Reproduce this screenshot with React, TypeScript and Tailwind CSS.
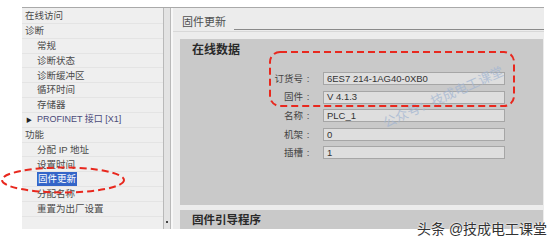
import React from "react";

const cjk = { fontFamily: '"Liberation Sans", "Noto Sans CJK SC", sans-serif' };

type Item = { t: string; lvl: 0 | 1; sel?: boolean; arrow?: boolean; blue?: boolean };
const items: Item[] = [
  { t: "在线访问", lvl: 0 },
  { t: "诊断", lvl: 0 },
  { t: "常规", lvl: 1 },
  { t: "诊断状态", lvl: 1 },
  { t: "诊断缓冲区", lvl: 1 },
  { t: "循环时间", lvl: 1 },
  { t: "存储器", lvl: 1 },
  { t: "PROFINET 接口 [X1]", lvl: 1, arrow: true, blue: true },
  { t: "功能", lvl: 0 },
  { t: "分配 IP 地址", lvl: 1 },
  { t: "设置时间", lvl: 1 },
  { t: "固件更新", lvl: 1, sel: true },
  { t: "分配名称", lvl: 1 },
  { t: "重置为出厂设置", lvl: 1 },
];

const fields = [
  { l: "订货号", v: "6ES7 214-1AG40-0XB0" },
  { l: "固件", v: "V 4.1.3" },
  { l: "名称", v: "PLC_1" },
  { l: "机架", v: "0" },
  { l: "插槽", v: "1" },
];

export default function App() {
  return (
    <div className="relative w-[554px] h-[244px] bg-white overflow-hidden" style={cjk}>
      <div className="pl-[22px] pt-[7px]">
        <div className="flex w-[522px] h-[222px] border-t border-[#a9a9a9] bg-[#f4f4f4]">
          {/* left tree */}
          <div className="w-[141px] bg-[#efefef] pt-[1px] flex flex-col">
            {items.map((it, i) => (
              <div
                key={i}
                className="h-[14.85px] flex items-center border-b border-[#e4e4e4] text-[9.5px] leading-none text-[#4a4a4a]"
                style={{ paddingLeft: it.lvl === 0 ? 3 : it.arrow ? 4 : 15 }}
              >
                {it.arrow && <span className="text-[6px] text-[#222] mr-[5px]">▶</span>}
                {it.sel ? (
                  <span className="bg-[#3465c8] text-white px-[1px] py-[2px]">{it.t}</span>
                ) : (
                  <span className={it.blue ? "text-[#4a4a78] text-[9px]" : ""}>{it.t}</span>
                )}
              </div>
            ))}
          </div>
          {/* scrollbar */}
          <div className="w-[8px] bg-[#e3e3e3] border-x border-[#b9b9b9] flex flex-col justify-end items-center pb-[6px]">
            <div className="w-[2px] h-[2px] bg-[#444]" />
          </div>
          <div className="w-[2px] bg-[#f7f7f7]" />
          {/* right */}
          <div className="flex-1 bg-[#ececec] flex flex-col">
            <div className="h-[23px] flex items-end pl-[9px] pb-[1px]">
              <span className="text-[11px] leading-none text-[#505050] mb-[2px]">固件更新</span>
              <div className="flex-1 ml-[8px] border-b border-[#8a8a8a]" />
            </div>
            <div className="h-[1px] bg-[#d8d8d8]" />
            <div className="ml-[7px] mr-[1px] mt-[7px] h-[166px] bg-[#c9c9c9] flex flex-col">
              <div className="pl-[12px] pt-[5px] h-[33px] text-[12px] font-bold leading-none text-[#2a2a2a]">
                在线数据
              </div>
              <div className="flex flex-col gap-[5.6px]">
                {fields.map((f) => (
                  <div key={f.l} className="flex items-center h-[13px]">
                    <div className="w-[133px] text-right text-[9.5px] leading-none text-[#444]">
                      {f.l}
                      <span className="inline-block w-[10px] text-center">:</span>
                    </div>
                    <div className="ml-[10px] w-[182px] h-[13px] bg-[#dedede] border border-[#a6a6a6] flex items-center pl-[3px] text-[9.5px] leading-none text-[#333]">
                      {f.v}
                    </div>
                  </div>
                ))}
              </div>
            </div>
            <div className="ml-[7px] mr-[1px] mt-[5px] flex-1 bg-[#c9c9c9] pl-[12px] pt-[5px] text-[11.5px] font-bold leading-none text-[#2a2a2a]">
              固件引导程序
            </div>
          </div>
        </div>
      </div>

      {/* watermark */}
      <div
        className="absolute left-[384px] top-[116px] text-[13px] leading-[16px] text-[#a3b6d2] opacity-75 whitespace-nowrap"
        style={{ transform: "rotate(-24deg)", transformOrigin: "left center" }}
      >
        公众号：技成电工课堂
      </div>

      {/* red annotations */}
      <svg className="absolute left-0 top-0" width="554" height="244">
        <rect x="270" y="52" width="244" height="54" rx="10" ry="10" fill="none" stroke="#e8281e" strokeWidth="2" strokeDasharray="7 4" />
        <ellipse cx="63" cy="180" rx="61" ry="12.5" fill="none" stroke="#e8281e" strokeWidth="2" strokeDasharray="7 4" />
      </svg>

      {/* source tag */}
      <div
        className="absolute left-[417px] top-[222px] text-[14px] leading-none text-[#333] whitespace-nowrap"
        style={{ textShadow: "0 0 2px #fff, 0 0 2px #fff" }}
      >
        头条 @技成电工课堂
      </div>
    </div>
  );
}
